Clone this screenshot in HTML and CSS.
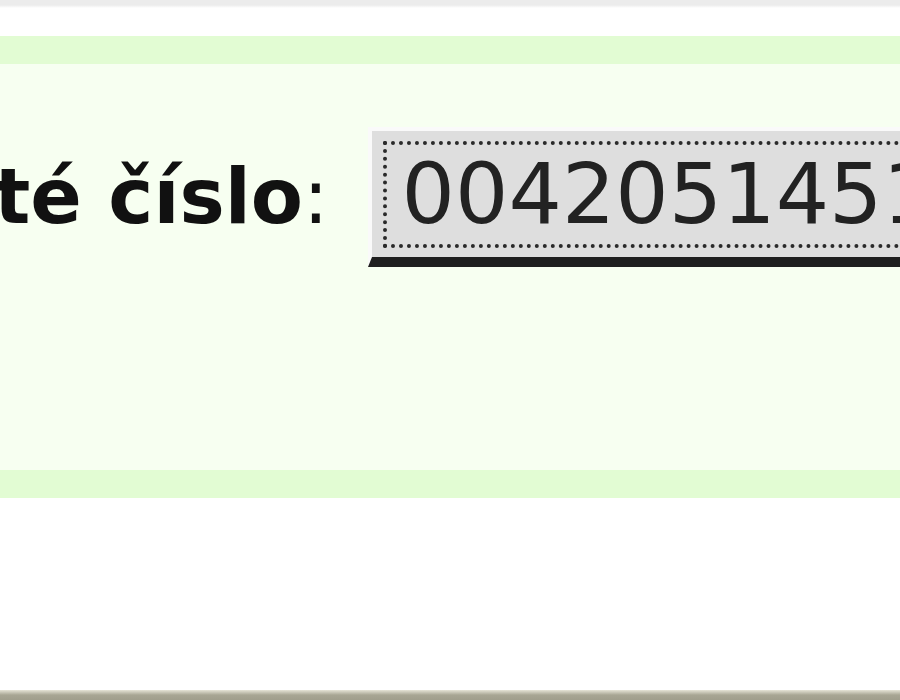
FILE: index.html
```html
<!DOCTYPE html>
<html lang="cs">
<head>
<meta charset="utf-8">
<title>Číslo</title>
<link rel="stylesheet" href="styles.css">
</head>
<body>
<div class="topbar"></div>
<div class="gap-top"></div>
<section class="panel">
  <div class="row">
    <span class="label"><b class="label-strong">té číslo</b>:</span>
    <span class="field"><span class="focus">004205145111</span></span>
  </div>
</section>
<div class="gap-bottom"></div>
<div class="statusbar"></div>
</body>
</html>
```

FILE: styles.css
```css
html, body {
  margin: 0;
  padding: 0;
  background: #ffffff;
  overflow: hidden;
  width: 900px;
  height: 700px;
}

.topbar {
  height: 8px;
  background: linear-gradient(#ececec 0, #ececec 5px, #ffffff 8px);
}

.gap-top {
  height: 28px;
}

.panel {
  background: #f7fff1;
  border-top: 28px solid #e2fcd3;
  border-bottom: 28px solid #e2fcd3;
  box-sizing: border-box;
  height: 462px;
  padding: 63px 0 0 0;
}

.row {
  display: flex;
  align-items: baseline;
  white-space: nowrap;
}

.label {
  font-family: "DejaVu Sans", sans-serif;
  font-weight: normal;
  font-size: 76px;
  color: #111111;
  margin-left: -6px;
}

.label-strong {
  font-weight: bold;
}

.field {
  display: inline-block;
  margin-left: 39px;
  background: #dedede;
  border-style: solid;
  border-width: 4px 0 10px 4px;
  border-color: #fafafa #222222 #1f1f1f #fafafa;
  padding: 10px 0 9px 11px;
  width: 700px;
}

.focus {
  display: block;
  border: 4px dotted #2a2a2a;
  border-right: none;
  padding: 0 0 0 15px;
  font-family: "DejaVu Sans", sans-serif;
  font-size: 84px;
  line-height: 99px;
  height: 99px;
  color: #222222;
}

.gap-bottom {
  height: 192px;
}

.statusbar {
  height: 10px;
  background: linear-gradient(#e6e4d6 0, #a8a694 5px, #a09e8c 10px);
}
```
